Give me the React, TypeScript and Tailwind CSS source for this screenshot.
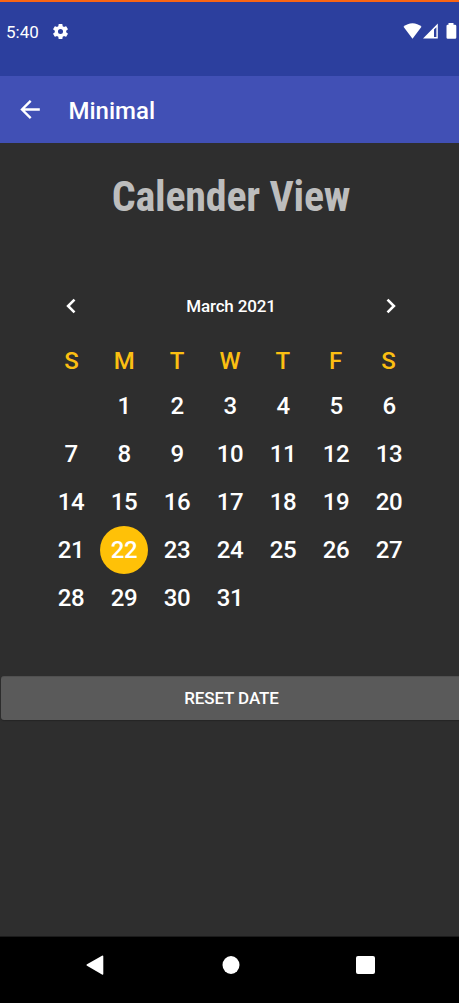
import React from "react";

const weekdays = ["S", "M", "T", "W", "T", "F", "S"];
const days: (number | null)[] = [null, ...Array.from({ length: 31 }, (_, i) => i + 1)];

function StatusBar() {
  return (
    <div className="flex h-[74px] items-start justify-between bg-[#2c3f9e] pl-[6px] pr-[2px] pt-[20px] text-white">
      <div className="flex h-5 items-center">
        <span className="w-[45px] text-[17px] leading-5">5:40</span>
        <svg className="-mt-px h-[19px] w-[19px]" viewBox="0 0 24 24" fill="currentColor">
          <path d="M19.14 12.94c.04-.3.06-.61.06-.94s-.02-.64-.07-.94l2.03-1.58a.49.49 0 0 0 .12-.61l-1.92-3.32a.49.49 0 0 0-.59-.22l-2.39.96a7 7 0 0 0-1.62-.94l-.36-2.54a.48.48 0 0 0-.48-.41h-3.84a.48.48 0 0 0-.47.41l-.36 2.54c-.59.24-1.13.57-1.62.94l-2.39-.96a.48.48 0 0 0-.59.22L2.74 8.87a.48.48 0 0 0 .12.61l2.03 1.58c-.05.3-.09.63-.09.94s.02.64.07.94l-2.03 1.58a.49.49 0 0 0-.12.61l1.92 3.32c.12.22.37.29.59.22l2.39-.96c.5.38 1.03.7 1.62.94l.36 2.54c.05.24.24.41.48.41h3.84c.24 0 .44-.17.47-.41l.36-2.54c.59-.24 1.13-.56 1.62-.94l2.39.96c.22.08.47 0 .59-.22l1.92-3.32a.48.48 0 0 0-.12-.61zM12 15.2a3.2 3.2 0 1 1 0-6.4 3.2 3.2 0 0 1 0 6.4z" />
        </svg>
      </div>
      <svg className="h-5 w-[54px]" viewBox="0 0 54 20" fill="currentColor">
        <path d="M.5 4.8C5.5.1 13.5.1 18.5 4.8L9.5 16.7Z" />
        <path fillRule="evenodd" d="M20 16.5L34.8 1.500V16.500ZM31 7.500V15H33.400V5.200Z" />
        <path d="M45.500 1h5v1.700H52a1.300 1.300 0 0 1 1.300 1.300v11.500a1.300 1.300 0 0 1-1.300 1.300h-7.200a1.300 1.300 0 0 1-1.300-1.300V4a1.300 1.300 0 0 1 1.300-1.300h.7Z" />
      </svg>
    </div>
  );
}

function AppBar() {
  return (
    <header className="flex h-[67px] items-center bg-[#4150b5] pl-[20px] text-white">
      <button aria-label="Back" className="w-[48.5px]">
        <svg className="h-5 w-5" viewBox="0 0 20 20" fill="none" stroke="currentColor" strokeWidth="2.400">
          <path d="M19.800 9.500H2M10.700 .8L2 9.500l8.700 8.700" />
        </svg>
      </button>
      <h1 className="pt-[2px] text-[24px] font-medium leading-7">Minimal</h1>
    </header>
  );
}

function Chevron({ next }: { next?: boolean }) {
  return (
    <button aria-label={next ? "Next month" : "Previous month"} className="flex w-[53px] justify-center">
      <svg className="h-4 w-3" viewBox="0 0 12 16" fill="none" stroke="currentColor" strokeWidth="2.600">
        <path d={next ? "M2.500 1.600L8.900 8l-6.400 6.400" : "M9.500 1.600L3.100 8l6.400 6.400"} />
      </svg>
    </button>
  );
}

function Calendar() {
  return (
    <section className="mx-auto mt-[69px] w-[371px]">
      <div className="-mr-[3px] flex h-8 items-center justify-between text-white">
        <Chevron />
        <span className="text-[17px] font-medium leading-5 tracking-[-0.15px]">March 2021</span>
        <Chevron next />
      </div>
      <div className="mt-[15px] grid h-12 grid-cols-7 items-center pl-px text-center text-[24px] font-medium text-[#fbbf12]">
        {weekdays.map((d, i) => (
          <span key={i}>{d}</span>
        ))}
      </div>
      <div className="-mt-[3px] grid auto-rows-[48px] grid-cols-7 items-center justify-items-center text-[24px] font-medium tracking-[-0.4px] text-white">
        {days.map((d, i) => (
          <span
            key={i}
            className={
              d === 22
                ? "flex size-12 items-center justify-center rounded-full bg-[#ffc107] pl-px"
                : "flex size-12 items-center justify-center pl-px"
            }
          >
            {d}
          </span>
        ))}
      </div>
    </section>
  );
}

export default function App() {
  return (
    <div className="flex h-[1003px] w-[459px] flex-col overflow-hidden border-t-2 border-[#fb6514] bg-[#2e2e2e] font-['Roboto',sans-serif]">
      <StatusBar />
      <AppBar />
      <main className="flex-1">
        <h2 className="mt-[30px] whitespace-nowrap pl-[3px] text-center font-['Roboto_Condensed','Roboto',sans-serif] text-[42px] font-bold leading-[48px] tracking-[-0.2px] text-[#bdbdbd] [font-stretch:75%]">
          Calender View
        </h2>
        <Calendar />
        <button className="ml-[1px] mt-[54px] block h-[44px] w-[458px] rounded-l-[3px] border-t border-[#505050] bg-[#5a5a5a] pl-[3px] text-[17px] font-medium tracking-[-0.1px] text-white shadow-[0_1px_1px_#252525]">
          RESET DATE
        </button>
      </main>
      <nav className="flex h-[67px] items-start border-t border-[#1b1b1b] bg-black pt-[18px] text-white">
        <svg className="ml-[85px] h-[22px] w-[19px]" viewBox="0 0 19 22" fill="currentColor">
          <path d="M17 .8Q18.300.1 18.300 1.500V18.700Q18.300 20.100 17 19.400L2 10.800Q.7 10 2 9.300Z" />
        </svg>
        <svg className="ml-[118px] h-5 w-[18px]" viewBox="0 0 18 20" fill="currentColor">
          <ellipse cx="9" cy="10" rx="8.500" ry="9" />
        </svg>
        <span className="ml-[116px] mt-px h-[18px] w-[19px] rounded-[2px] bg-white" />
      </nav>
    </div>
  );
}
